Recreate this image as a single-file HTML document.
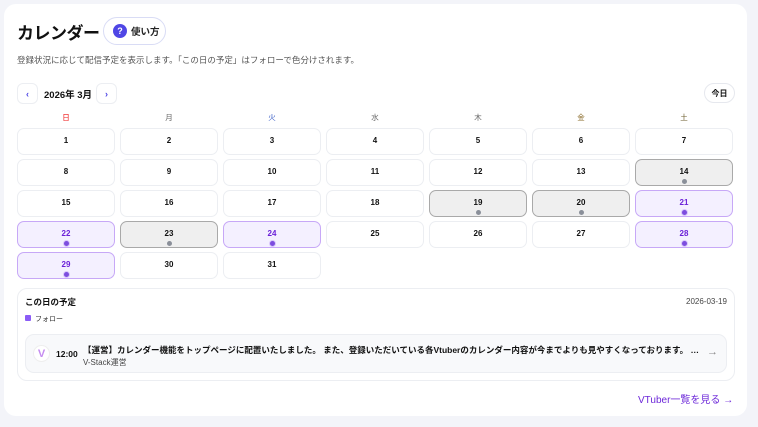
<!DOCTYPE html>
<html><head><meta charset="utf-8"><style>
*{box-sizing:border-box;margin:0;padding:0}
body{width:758px;height:427px;background:#f3f4f9;font-family:"Liberation Sans","Noto Sans CJK JP",sans-serif;color:#111;position:relative;overflow:hidden}
.card{position:absolute;left:4px;top:4px;width:743px;height:412px;background:#fff;border-radius:12px}
.a{position:absolute}
h1{position:absolute;left:17px;top:19px;font-size:17px;font-weight:700;letter-spacing:-0.5px;white-space:nowrap}
.help{left:103px;top:17px;width:63px;height:28px;border:1px solid #d9dcf5;border-radius:14px;font-size:9.5px;font-weight:700;color:#222;display:flex;align-items:center;padding-left:9px;gap:4px;background:#fff}
.help i{width:14px;height:14px;border-radius:50%;background:#4f46e5;color:#fff;font-style:normal;font-size:9px;display:flex;align-items:center;justify-content:center;flex:none}
.desc{left:17px;top:54px;font-size:8.5px;color:#555}
.nb{width:21px;height:21px;border:1px solid #eceef2;border-radius:6px;font-size:9px;color:#4f46e5;display:flex;align-items:center;justify-content:center;font-weight:700}
.mon{left:44px;top:87px;font-size:9.5px;font-weight:700}
.today{left:704px;top:83px;width:31px;height:20px;border:1px solid #e6e8ee;border-radius:10px;font-size:8px;font-weight:700;display:flex;align-items:center;justify-content:center}
.wd{top:112px;width:98px;text-align:center;font-size:7.5px;color:#666}
.c{width:98px;height:27px;border:1px solid #eceef2;border-radius:7px;text-align:center;font-size:8px;font-weight:700;padding-top:7px}
.c.g{background:#efefef;border-color:#a9a9a9}
.c.p{background:#f4f0ff;border-color:#c7a8f7;color:#6b21d8}
.c b{display:block;width:5px;height:5px;border-radius:50%;background:#8a8f99;margin:3px auto 0}
.c.p b{background:#7c4ddf;box-shadow:0 0 0 1px #d9c6fb}
.box{left:17px;top:288px;width:718px;height:93px;border:1px solid #eceef2;border-radius:10px}
.item{left:25px;top:334px;width:702px;height:39px;border:1px solid #eceef2;border-radius:9px;background:#f8f9fb}
</style></head><body>
<div class="card"></div>
<h1>カレンダー</h1>
<div class="a help"><i>?</i>使い方</div>
<div class="a desc">登録状況に応じて配信予定を表示します。「この日の予定」はフォローで色分けされます。</div>
<div class="a nb" style="left:17px;top:83px">‹</div>
<div class="a mon">2026年 3月</div>
<div class="a nb" style="left:96px;top:83px">›</div>
<div class="a today">今日</div>
<div class="a wd" style="left:17px;color:#e11">日</div>
<div class="a wd" style="left:120px">月</div>
<div class="a wd" style="left:223px;color:#3358c4">火</div>
<div class="a wd" style="left:326px">水</div>
<div class="a wd" style="left:429px">木</div>
<div class="a wd" style="left:532px;color:#8a6b2a">金</div>
<div class="a wd" style="left:635px;color:#6a5a2a">土</div>
<div id="g"></div>
<script>
var s='',g={14:1,19:1,20:1,23:1},p={21:1,22:1,24:1,28:1,29:1};
for(var d=1;d<=31;d++){var i=d-1,col=i%7,row=Math.floor(i/7);var cl=g[d]?' g':p[d]?' p':'';
s+='<div class="a c'+cl+'" style="left:'+(17+col*103)+'px;top:'+(128+row*31)+'px">'+d+(cl?'<b></b>':'')+'</div>';}
document.getElementById('g').innerHTML=s;
</script>
<div class="a box"></div>
<div class="a" style="left:25px;top:296px;font-size:8.5px;font-weight:700">この日の予定</div>
<div class="a" style="left:686px;top:297px;font-size:8px;color:#444">2026-03-19</div>
<div class="a" style="left:25px;top:315px;width:6px;height:6px;background:#8b5cf6;border-radius:1px"></div>
<div class="a" style="left:35px;top:314px;font-size:7px;color:#333">フォロー</div>
<div class="a item"></div>
<div class="a" style="left:33px;top:345px;width:17px;height:17px;border-radius:50%;background:#fff;border:1px solid #eee;font-size:11px;font-weight:700;color:#c58cf0;text-align:center;line-height:16px">V</div>
<div class="a" style="left:56px;top:349px;font-size:8.5px;font-weight:700">12:00</div>
<div class="a" style="left:83px;top:344px;width:620px;font-size:8.5px;font-weight:700;white-space:nowrap;overflow:hidden;text-overflow:ellipsis">【運営】カレンダー機能をトップページに配置いたしました。 また、登録いただいている各Vtuberのカレンダー内容が今までよりも見やすくなっております。 機能追加…</div>
<div class="a" style="left:83px;top:357px;font-size:8px;color:#444">V-Stack運営</div>
<div class="a" style="left:707px;top:346px;font-size:11px;color:#888">→</div>
<div class="a" style="left:638px;top:391px;font-size:10px;color:#6d28d9">VTuber一覧を見る →</div>
</body></html>
